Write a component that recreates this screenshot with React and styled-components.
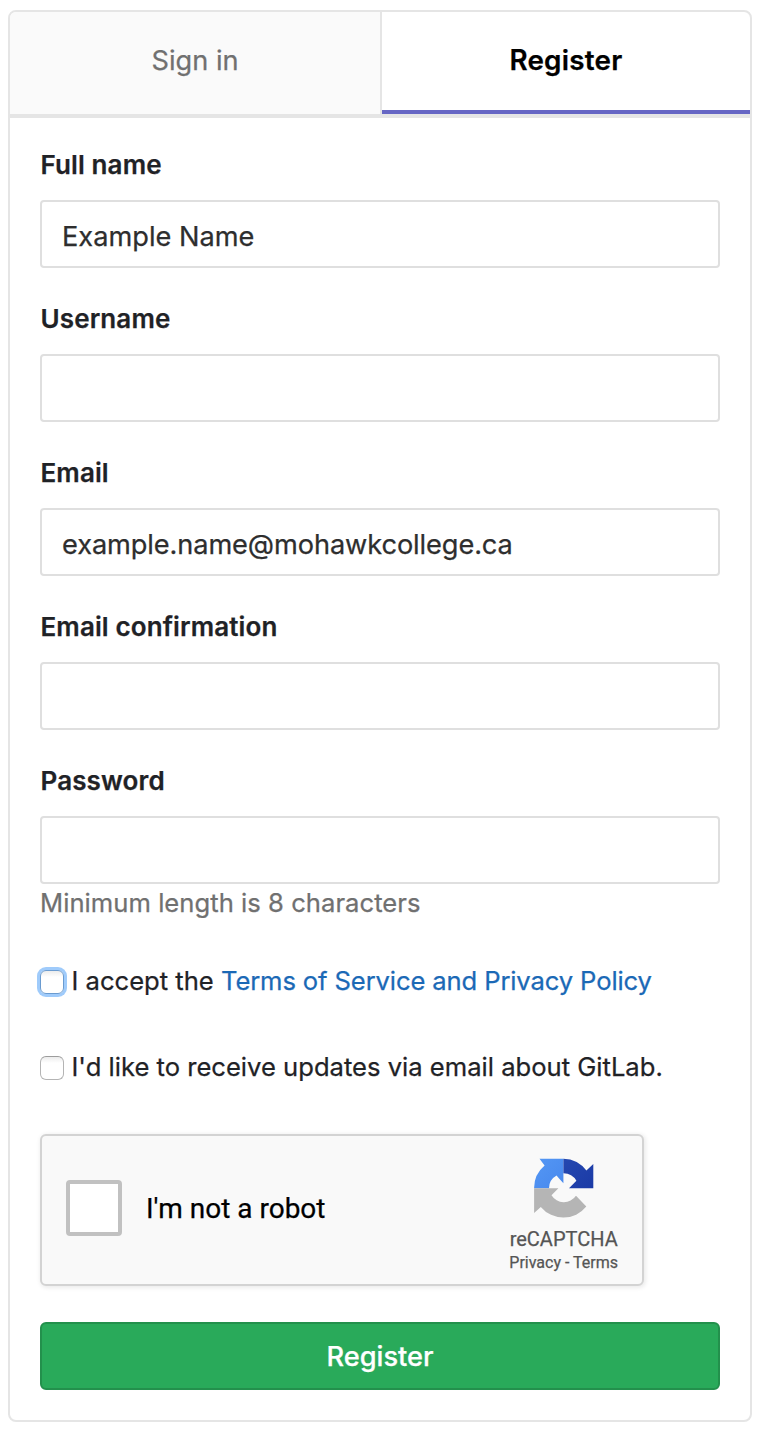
import React from "react";
import styled, { createGlobalStyle, css } from "styled-components";

const GlobalStyle = createGlobalStyle`
  *, *::before, *::after { box-sizing: border-box; }
  body {
    margin: 0;
    background: #fff;
    color: #1f2226;
    font-family: Inter, "Liberation Sans", sans-serif;
    font-size: 25.6px;
    -webkit-text-stroke: 0.25px;
  }
`;

const Page = styled.main`
  padding: 10px 6px 8px 8px;
`;

const Card = styled.section`
  width: 744px;
  border: 2px solid #e5e5e5;
  border-radius: 8px;
`;

const Tabs = styled.nav`
  display: flex;
  height: 106px;
  border-bottom: 4px solid #e5e5e5;
`;

const Tab = styled.a`
  flex: none;
  width: ${(p) => (p.$active ? 368 : 372)}px;
  line-height: 36px;
  text-align: center;
  text-decoration: none;
  ${(p) =>
    p.$active
      ? css`
          padding-top: 30px;
          color: #000;
          font-size: 27.8px;
          font-weight: 600;
          letter-spacing: 0.25px;
          border-bottom: 4px solid #6666c4;
          border-top-right-radius: 6px;
        `
      : css`
          padding-top: 31px;
          color: #707070;
          font-size: 27.2px;
          background: #fafafa;
          border-right: 2px solid #e5e5e5;
          border-top-left-radius: 6px;
        `}
`;

const Form = styled.form`
  padding: 30px;
`;

const Field = styled.div`
  display: flex;
  flex-direction: column;
  margin-bottom: ${(p) => (p.$last ? 0 : 34)}px;
`;

const Label = styled.label`
  margin-bottom: 18px;
  padding-left: 0.5px;
  line-height: 34px;
  font-size: 26px;
  font-weight: 600;
  letter-spacing: 0.12px;
`;

const Input = styled.input`
  width: 100%;
  height: 68px;
  padding: 4px 20px 0;
  border: 2px solid #dfdfdf;
  border-radius: 4px;
  outline: none;
  background: #fff;
  color: #2e2e2e;
  font-family: inherit;
  font-size: 27.2px;
  letter-spacing: ${(p) => p.$track || 0}px;
`;

const Hint = styled.p`
  margin: 0 0 41px;
  line-height: 38px;
  color: #707070;
  letter-spacing: 0.04px;
`;

const CheckRow = styled.label`
  display: flex;
  align-items: center;
  height: 36px;
  margin-bottom: ${(p) => p.$gap}px;
  white-space: pre;
`;

const CheckText = styled.span`
  padding-bottom: 2px;
`;

const Checkbox = styled.input`
  appearance: none;
  flex: none;
  width: 24px;
  height: 24px;
  margin: 2px 7.5px 0 0;
  border: 1.5px solid #b4b4b4;
  border-top-color: #9c9c9c;
  border-radius: 6px;
  background: linear-gradient(#ececec, #fff 6px);
  ${(p) =>
    p.$focused &&
    css`
      border-color: #6a9bd0;
      box-shadow: 0 0 0 3px #9fcbfb;
    `}
`;

const TermsLink = styled.a`
  color: #1b69b6;
  text-decoration: none;
  letter-spacing: -0.12px;
`;

const Captcha = styled.div`
  display: flex;
  align-items: center;
  width: 604px;
  height: 152px;
  padding: 0 24px;
  margin-bottom: 36px;
  border: 2px solid #d3d3d3;
  border-radius: 6px;
  background: #f9f9f9;
  box-shadow: 1px 1px 4px 1px rgba(0, 0, 0, 0.08);
  font-family: Roboto, sans-serif;
`;

const CaptchaBox = styled.span`
  width: 56px;
  height: 56px;
  margin: 0 24px 4px 0;
  border: 4px solid #c1c1c1;
  border-radius: 4px;
  background: #fff;
`;

const CaptchaText = styled.span`
  flex: 1;
  margin-bottom: 3px;
  color: #000;
  font-size: 28px;
`;

const Brand = styled.div`
  display: flex;
  flex-direction: column;
  align-items: center;
  align-self: flex-start;
  padding-top: 22px;
  color: #555;
  white-space: nowrap;
  svg { display: block; }
`;

const BrandName = styled.span`
  margin-top: 8px;
  font-size: 20px;
  line-height: 24px;
`;

const BrandLinks = styled.span`
  font-size: 16px;
  line-height: 24px;
`;

const Submit = styled.button`
  display: block;
  width: 100%;
  height: 68px;
  padding: 0;
  border: 2px solid #23904c;
  border-radius: 6px;
  background: #29aa5a;
  color: #fff;
  font-family: inherit;
  font-size: 27.2px;
  font-weight: 500;
`;

const fields = [
  { id: "name", label: "Full name", value: "Example Name" },
  { id: "username", label: "Username", value: "" },
  { id: "email", label: "Email", value: "example.name@mohawkcollege.ca", track: -0.1 },
  { id: "confirm", label: "Email confirmation", value: "" },
  { id: "password", label: "Password", value: "" },
];

function CaptchaLogo() {
  return (
    <svg width="60" height="61" viewBox="0 0 60 61" aria-hidden="true">
      <defs>
        <linearGradient id="sky" x1="0" y1="0" x2="1" y2="1">
          <stop offset="0" stopColor="#5497f4" />
          <stop offset="1" stopColor="#4788ed" />
        </linearGradient>
        <linearGradient id="navy" x1="0" y1="0" x2="1" y2="1">
          <stop offset="0" stopColor="#2448b0" />
          <stop offset="1" stopColor="#1b3aa6" />
        </linearGradient>
      </defs>
      <path
        fill="url(#sky)"
        d="M5.5 0.7H29.4V25.2L24.2 19.4L22.6 17.6A14.6 14.6 0 0 0 15 30.2H0.1A29.4 29.4 0 0 1 10.6 7.4Z"
      />
      <path
        fill="url(#navy)"
        d="M29.4 0.7A29.4 29.4 0 0 1 52.4 12.6L59.3 6V30.2H35L42.4 22.8A14.8 14.8 0 0 0 29.4 15.2Z"
      />
      <path
        fill="#b5b5b5"
        d="M0.1 30.2H24.4L17.5 37.2A14.6 14.6 0 0 0 42 37.8L52.3 48.6A29.4 29.4 0 0 1 6.8 49L0.1 55Z"
      />
    </svg>
  );
}

export default function App() {
  return (
    <>
      <GlobalStyle />
      <Page>
        <Card>
          <Tabs>
            <Tab>Sign in</Tab>
            <Tab $active>Register</Tab>
          </Tabs>
          <Form onSubmit={(e) => e.preventDefault()}>
            {fields.map((f, i) => (
              <Field key={f.id} $last={i === fields.length - 1}>
                <Label htmlFor={f.id}>{f.label}</Label>
                <Input
                  id={f.id}
                  type={f.id === "password" ? "password" : "text"}
                  defaultValue={f.value}
                  $track={f.track}
                />
              </Field>
            ))}
            <Hint>Minimum length is 8 characters</Hint>
            <CheckRow $gap={50}>
              <Checkbox type="checkbox" $focused />
              <CheckText>
                I accept the <TermsLink>Terms of Service and Privacy Policy</TermsLink>
              </CheckText>
            </CheckRow>
            <CheckRow $gap={49}>
              <Checkbox type="checkbox" />
              <CheckText>I'd like to receive updates via email about GitLab.</CheckText>
            </CheckRow>
            <Captcha>
              <CaptchaBox />
              <CaptchaText>I'm not a robot</CaptchaText>
              <Brand>
                <CaptchaLogo />
                <BrandName>reCAPTCHA</BrandName>
                <BrandLinks>Privacy - Terms</BrandLinks>
              </Brand>
            </Captcha>
            <Submit type="submit">Register</Submit>
          </Form>
        </Card>
      </Page>
    </>
  );
}
